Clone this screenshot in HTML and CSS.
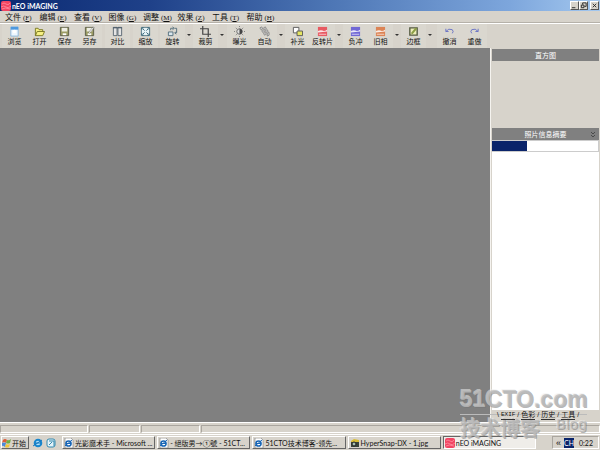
FILE: index.html
```
<!DOCTYPE html>
<html lang="zh-CN">
<head>
<meta charset="utf-8">
<title>nEO iMAGING</title>
<link rel="stylesheet" href="styles.css">
</head>
<body>
<svg class="defs" aria-hidden="true">
  <symbol id="neo" viewBox="0 0 10 10"><rect width="10" height="10" rx="2" fill="#f14562"/><path d="M1 3Q3 1 5 3T9 2M0 6Q3 4 5 6T10 5M1 8Q4 6 9 8" stroke="#ff9bab" stroke-width=".7" fill="none"/></symbol>
  <symbol id="ie" viewBox="0 0 10 10"><path d="M1 0h6l2 2v8H1z" fill="#fff" stroke="#777" stroke-width=".6"/><circle cx="4.5" cy="5.5" r="2.6" fill="none" stroke="#1765b5" stroke-width="1.5"/><path d="M2 5.5h5M1 8L8 2" stroke="#1765b5"/></symbol>
  <symbol id="film" viewBox="0 0 12 12"><path d="M1 1h10v10H1z" fill="currentColor"/><path d="M1 5.500q3-1.500 5-.5t5-1v2q-3 0-5 .5t-5 .5z" fill="#fff" fill-opacity=".85"/><path d="M2 9h8" fill="none" stroke="#fff" stroke-opacity=".7"/></symbol>
  <symbol id="save" viewBox="0 0 12 12"><path d="M1.500 1.500h9v9h-9z" fill="#9b9c63" stroke="#5b5c45"/><path d="M3 2h6v4H3z" fill="#eeeee4"/><path d="M4 8h4v2H4z" fill="#fff"/></symbol>
</svg>
<div class="window">
  <header class="title">
    <svg class="logo"><use href="#neo"/></svg><h1>nEO iMAGING</h1>
    <div class="controls">
      <button aria-label="最小化"><svg viewBox="0 0 8 8"><path d="M1 6.500h4"/></svg></button>
      <button aria-label="还原"><svg viewBox="0 0 8 8"><path d="M3 3V1h4v4H5M1.500 3.500h3v3h-3z"/></svg></button>
      <button class="close" aria-label="关闭"><svg viewBox="0 0 8 8"><path d="M2 2l4 4M6 2L2 6"/></svg></button>
    </div>
  </header>
  <nav class="menu">
    <button>文件<span>(<u>F</u>)</span></button><button>编辑<span>(<u>E</u>)</span></button><button>查看<span>(<u>V</u>)</span></button><button>图像<span>(<u>G</u>)</span></button><button>调整<span>(<u>M</u>)</span></button><button>效果<span>(<u>Z</u>)</span></button><button>工具<span>(<u>T</u>)</span></button><button>帮助<span>(<u>H</u>)</span></button>
  </nav>
  <div class="toolbar">
    <button><svg viewBox="0 0 12 12"><path d="M2 1h8v10H2z" fill="#eef7ff" stroke="#8ab6dd"/><path d="M2 1h8v3H2z" fill="#4c99df"/><circle cx="6" cy="6" r="2" fill="#fff"/></svg>浏览</button>
    <button><svg viewBox="0 0 12 12"><path d="M1.500 10.500v-8h3l1 1.500h4v2M1.500 10.500l2-4.500h8l-2 4.500z" fill="#f5ef83" stroke="#777522"/></svg>打开</button>
    <button><svg><use href="#save"/></svg>保存</button>
    <button><svg viewBox="0 0 12 12"><use href="#save"/><path d="M5 7l5-6 1 1-5 6z" fill="#fff" stroke="#555" stroke-width=".5"/></svg>另存</button>
    <span class="gap wide"></span>
    <button><svg viewBox="0 0 12 12"><path d="M1.500 1.500h4v9h-4zM6.500 1.500h4v9h-4z" fill="#e4e4e4" stroke="#566570"/><path d="M1 2h10" stroke="#456"/></svg>对比</button>
    <span class="gap wide"></span>
    <button><svg viewBox="0 0 12 12"><path d="M1.500 1.500h9v9h-9z" fill="#e6f2f5" stroke="#547787"/><path d="M2 4V2h2M8 2h2v2M2 8v2h2M10 8v2H8M3 3l2 2M9 3L7 5M3 9l2-2M9 9L7 7" stroke="#356476" fill="none"/></svg>缩放</button>
    <span class="gap"></span>
    <button><svg viewBox="0 0 12 12"><path d="M1.500 6.500h5v4h-5z" fill="#d9e6ec" stroke="#536d7c"/><path d="M4 4.500V2.500h3M6 1l2 1.500L6 4M8.500 2.500h2v5h-2M10 6L8.500 7.500 10 9" fill="none" stroke="#536d7c"/></svg>旋转</button><button class="arrow" aria-label="旋转选项"></button>
    <button><svg viewBox="0 0 12 12"><path d="M3 0v9h9M0 3h9v9" fill="none" stroke="#444" stroke-width="1.300"/></svg>裁剪</button><button class="arrow" aria-label="裁剪选项"></button>
    <span class="gap small"></span>
    <button><svg viewBox="0 0 12 12"><circle cx="6" cy="6" r="3" fill="#ddd" stroke="#666"/><path d="M6 3a3 3 0 010 6z" fill="#444"/><path d="M6 0v1M6 11v1M0 6h1M11 6h1M2 2l1 1M9 9l1 1M2 10l1-1M9 3l1-1" stroke="#777"/></svg>曝光</button>
    <button><svg viewBox="0 0 12 12"><path d="M1 2l2-1 1 2-2 1zM5 2l2-1 1 2-2 1zM3 5l2-1 1 2-2 1zM7 5l2-1 1 2-2 1zM5 8l2-1 1 2-2 1zM9 8l2-1v3l-2 1z" fill="#d8d8d8" stroke="#777" stroke-width=".8"/></svg>自动</button><button class="arrow" aria-label="自动选项"></button>
    <button><svg viewBox="0 0 12 12"><path d="M1.500 1.500h6v6h-6z" fill="#fff" stroke="#555"/><path d="M5.500 5.500h6v5h-6z" fill="#e4e461" stroke="#555"/></svg>补光</button>
    <button><svg class="red"><use href="#film"/></svg>反转片</button><button class="arrow" aria-label="反转片选项"></button>
    <button><svg class="violet"><use href="#film"/></svg>负冲</button>
    <button><svg class="orange"><use href="#film"/></svg>旧相</button><button class="arrow" aria-label="旧相选项"></button>
    <button><svg viewBox="0 0 12 12"><path d="M2 2h8v8H2z" fill="#eeeeba" stroke="#555b42" stroke-width="1.500"/><path d="M3 8l5-6 2 1-5 6z" fill="#8c9f45"/></svg>边框</button><button class="arrow" aria-label="边框选项"></button>
    <span class="gap wide"></span>
    <button><svg viewBox="0 0 12 12"><path d="M2 3v3h3M2 6q3-4 7-2 2 2 0 4" fill="none" stroke="#6670c5"/></svg>撤消</button>
    <button><svg viewBox="0 0 12 12"><path d="M10 3v3H7M10 6Q7 2 3 4q-2 2 0 4" fill="none" stroke="#6670c5"/></svg>重做</button>
  </div>
  <main>
    <section class="canvas" aria-label="画布"></section>
    <aside>
      <h2>直方图</h2><div class="histogram"></div>
      <h2>照片信息摘要<svg class="chevrons" viewBox="0 0 6 7"><path d="M1 1l2 2 2-2M1 4l2 2 2-2"/></svg></h2>
      <div class="info"><div class="selected"></div></div>
      <nav class="tabs"><span>\</span><a href="#">EXIF</a><span>/</span><a href="#">色彩</a><span>/</span><a href="#">历史</a><span>/</span><a href="#">工具</a><span>/</span></nav>
    </aside>
  </main>
  <div class="status"><span></span><span></span><span></span><span></span></div>
  <footer class="taskbar">
    <button class="start"><svg viewBox="0 0 10 10"><path d="M1 2q2-2 4 0L4 5Q2 3 0 5z" fill="#dd5d38"/><path d="M5 2q2 1 4-1L8 5Q6 6 4 5z" fill="#70ae45"/><path d="M0 5q2-1 4 0L3 9Q1 7 0 8z" fill="#4b8ad9"/><path d="M4 6q2 1 4 0L7 9Q5 10 3 9z" fill="#efc438"/></svg>开始</button>
    <div class="quick"><svg viewBox="0 0 10 10"><circle cx="5" cy="5" r="3.300" fill="#ade1fc" stroke="#1686ce" stroke-width="2"/><path d="M2 5h6M0 8L9 2" stroke="#1676bd"/></svg><svg viewBox="0 0 10 10"><rect x="1" y="1" width="8" height="8" rx="2" fill="#e4f3f9" stroke="#3589ae"/><path d="M3 3h5v5M3 7l3-3" fill="none" stroke="#3589ae"/></svg></div>
    <div class="tasks">
      <button><svg><use href="#ie"/></svg><span>光影魔术手 - Microsoft ...</span></button>
      <button><svg><use href="#ie"/></svg><span>- 絕版男→①號 - 51CT...</span></button>
      <button><svg><use href="#ie"/></svg><span>51CTO技术博客-领先...</span></button>
      <button><svg viewBox="0 0 10 10"><path d="M1 4h8v5H1z" fill="#39443a"/><path d="M1 3l3-2 5 1v2H1z" fill="#d9bd35"/><circle cx="4" cy="6" r="2" fill="#a8c2b1" stroke="#222"/></svg><span>HyperSnap-DX - 1.jpg</span></button>
      <button class="active"><svg><use href="#neo"/></svg><span>nEO iMAGING</span></button>
    </div>
    <div class="tray"><span class="more">«</span><b>CH</b><time>0:22</time></div>
  </footer>
  <div class="watermark"><div class="domain">51CTO.com</div><div class="caption"><span>技术博客</span><span class="blog">Blog</span></div></div>
</div>
</body>
</html>
```
FILE: styles.css
```
* { box-sizing: border-box; }
body { margin: 0; font: 8px/10px "Liberation Sans", "Noto Sans CJK SC", sans-serif; color: #111; }
button { font: inherit; color: inherit; margin: 0; padding: 0; border: 0; background: none; white-space: nowrap; }
.defs { position: absolute; width: 0; height: 0; }
.window { position: relative; display: flex; flex-direction: column; height: 100vh; background: #d7d3cb; overflow: hidden; }
.title { display: flex; align-items: center; height: 11px; flex: none; padding: 0 1px; background: linear-gradient(90deg, #0b2a73, #1f4189 25%, #4d76b5 55%, #7da6dc 85%, #a4c8ef); color: #fff; }
.title h1 { flex: 1; margin: 0; font: bold 7px/10px Lato, sans-serif; }
.logo { width: 10px; height: 10px; margin-right: 1px; }
.controls { display: flex; }
.controls button { width: 9px; height: 9px; background: #d7d3cb; border: 1px solid; border-color: #fff #555 #555 #fff; }
.controls .close { margin-left: 2px; }
.controls svg { display: block; width: 7px; height: 7px; fill: none; stroke: #222; }
.menu { display: grid; grid-template-columns: repeat(8, 1fr); width: 276px; height: 12px; flex: none; margin-left: 5px; line-height: 11px; }
.menu button { text-align: left; }
.menu span { margin-left: 2px; font: 7px "Liberation Serif", serif; }
.menu u { text-underline-offset: 1px; }
.toolbar { display: flex; height: 25px; flex: none; padding-left: 2px; border-top: 1px solid #fff; box-shadow: 0 -1px #b5b1a9; }
.toolbar button { display: flex; flex-direction: column; align-items: center; width: 25px; padding-top: 2px; font-size: 7px; line-height: 9px; background: #dad7cf; }
.toolbar svg { width: 11px; height: 11px; flex: none; }
.toolbar .arrow { width: 8px; padding-top: 10px; background: none; }
.arrow::after { content: ""; border: 2px solid transparent; border-top-color: #333; }
.gap { width: 2px; }
.wide { width: 3px; }
.small { width: 1px; }
.red { color: #e85a62; }
.violet { color: #7168d5; }
.orange { color: #dc8455; }
main { display: flex; flex: 1; min-height: 0; }
.canvas { flex: 1; background: #808080; }
aside { display: flex; flex-direction: column; width: 110px; padding: 1px 1px 0; border-left: 1px solid #f5f3ef; }
aside h2 { position: relative; height: 12px; margin: 0; background: #808080; color: #fff; font: 7px/12px "Noto Sans CJK SC", sans-serif; text-align: center; }
.histogram { height: 67px; }
.chevrons { position: absolute; right: 3px; top: 3px; width: 6px; height: 7px; fill: none; stroke: #333; stroke-width: .7; }
.info { flex: 1; background: #fff; }
.selected { height: 12px; border: 1px solid #ccc; border-left: 0; background: linear-gradient(90deg, #0a246a 33%, #fff 33%); }
.tabs { position: relative; z-index: 1; display: flex; gap: 2px; height: 12px; padding-left: 5px; font-size: 7px; line-height: 10px; }
.tabs a { color: #111; text-decoration: none; border-bottom: 1px solid #333; height: 10px; }
.tabs a:first-of-type { font: 6px/9px "Liberation Mono", monospace; }
.status { display: grid; grid-template-columns: 88px 51px 59px 1fr; gap: 1px; height: 12px; flex: none; padding: 2px 0 1px; border-top: 1px solid #fff; }
.status span { border: 1px solid; border-color: #aaa69f #fff #fff #aaa69f; }
.taskbar { display: flex; align-items: center; height: 16px; flex: none; padding: 0 1px; border-top: 1px solid #fff; font-family: Lato, "Noto Sans CJK SC", sans-serif; font-size: 7px; }
.taskbar svg { width: 10px; height: 10px; flex: none; }
.start, .tasks button { display: flex; align-items: center; height: 13px; border: 1px solid; border-color: #fff #666 #666 #fff; }
.start { width: 28px; }
.quick { display: flex; gap: 3px; width: 33px; padding-left: 4px; }
.tasks { display: grid; grid-template-columns: repeat(5, 1fr); gap: 2px; flex: 1; min-width: 0; }
.tasks button { gap: 1px; padding-left: 1px; overflow: hidden; }
.tasks .active { background: #efede9; border-color: #666 #fff #fff #666; }
.tray { display: flex; align-items: center; gap: 3px; width: 47px; height: 13px; margin-left: 16px; padding-left: 3px; border: 1px solid; border-color: #aaa69f #fff #fff #aaa69f; }
.more { font: 9px/10px "Liberation Sans", sans-serif; }
.tray b { width: 10px; background: #0a246a; color: #fff; font-weight: normal; text-align: center; }
.tray time { margin-left: 2px; }
.watermark { position: absolute; right: 13px; bottom: 9px; width: 127px; color: #bdbdbdcc; text-shadow: 1px 1px #77777788, -1px -1px #eeeeee88; pointer-events: none; }
.domain { font: bold 23px/29px "Liberation Sans", sans-serif; border-bottom: 1px solid #bbb; }
.caption { display: flex; justify-content: space-between; font: bold 20px/26px "Noto Sans CJK SC", sans-serif; }
.blog { font: 14px/18px "DejaVu Sans", sans-serif; }
```
